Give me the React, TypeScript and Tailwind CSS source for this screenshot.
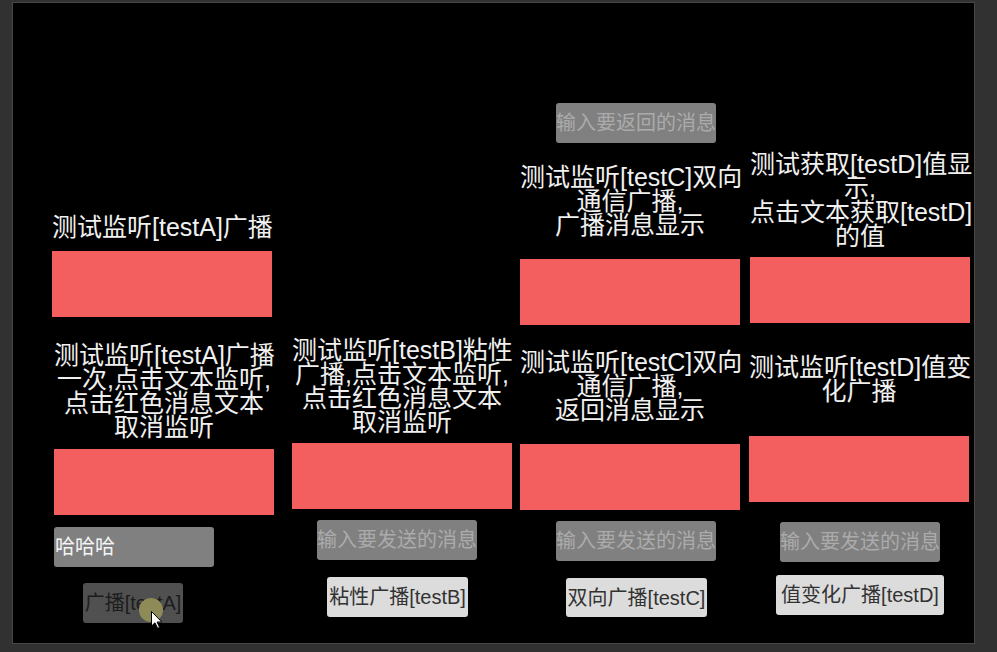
import React from "react";

const font = { fontFamily: '"Liberation Sans", Arial, "Noto Sans CJK SC", sans-serif' };

const Title = ({ lines, className = "" }: { lines: string[]; className?: string }) => (
  <div className={`w-[220px] text-center text-[25px] leading-[24px] text-[#f0f0f0] whitespace-nowrap ${className}`}>
    {lines.map((l, i) => (
      <div key={i}>{l}</div>
    ))}
  </div>
);

const RedBox = ({ className = "" }: { className?: string }) => (
  <div className={`h-[66px] w-[220px] bg-[#f35e5e] ${className}`} />
);

const Field = ({ text, placeholder, className = "" }: { text?: string; placeholder?: string; className?: string }) => (
  <div
    className={`flex h-[40px] w-[160px] items-center overflow-hidden whitespace-nowrap rounded-[3px] bg-[#808080] text-[20px] leading-none ${
      text ? "justify-start pl-[1px] text-[#f5f5f5]" : "justify-center text-[#ababab]"
    } ${className}`}
  >
    {text ?? placeholder}
  </div>
);

const Button = ({ label, className = "" }: { label: string; className?: string }) => (
  <div
    className={`flex h-[40px] items-center justify-center whitespace-nowrap rounded-[3px] bg-[#dcdcdc] text-[20px] leading-none text-[#323232] ${className}`}
  >
    {label}
  </div>
);

export default function App() {
  return (
    <div style={font} className="h-[652px] w-[997px] overflow-hidden bg-[#313131] pl-[12px] pt-[2px]">
      <div className="flex h-[642px] w-[963px] border border-[#474747] bg-black">
        {/* column A */}
        <div className="ml-[39px] flex w-[222px] flex-col">
          <Title className="mt-[212px]" lines={["测试监听[testA]广播"]} />
          <RedBox className="mt-[12px]" />
          <Title className="ml-[2px] mt-[26px]" lines={["测试监听[testA]广播", "一次,点击文本监听,", "点击红色消息文本", "取消监听"]} />
          <RedBox className="ml-[2px] mt-[10px]" />
          <Field className="ml-[2px] mt-[12px]" text="哈哈哈" />
          <div className="relative ml-[31px] mt-[16px] flex h-[40px] w-[100px] items-center justify-center whitespace-nowrap rounded-[3px] bg-[#505050] text-[20px] leading-none text-[#1c1c1c]">
            广播[testA]
            <div className="absolute left-[56px] top-[15px] h-[24px] w-[24px] rounded-full bg-[#8e8b58]" />
            <svg className="absolute left-[68px] top-[28px]" width="12" height="18" viewBox="0 0 12 18">
              <path d="M0.5 0.5 L0.5 15 L4 11.8 L6.6 17.3 L8.6 16.4 L6.1 11 L10.8 11 Z" fill="#fff" stroke="#000" strokeWidth="1" />
            </svg>
          </div>
        </div>

        {/* column B */}
        <div className="ml-[18px] flex w-[220px] flex-col">
          <Title className="mt-[335px]" lines={["测试监听[testB]粘性", "广播,点击文本监听,", "点击红色消息文本", "取消监听"]} />
          <RedBox className="mt-[9px]" />
          <Field className="ml-[25px] mt-[11px]" placeholder="输入要发送的消息" />
          <Button className="ml-[35px] mt-[17px] w-[141px]" label="粘性广播[testB]" />
        </div>

        {/* column C */}
        <div className="ml-[8px] flex w-[220px] flex-col">
          <Field className="ml-[36px] mt-[100px]" placeholder="输入要返回的消息" />
          <Title className="mt-[22px]" lines={["测试监听[testC]双向", "通信广播,", "广播消息显示"]} />
          <RedBox className="mt-[22px]" />
          <Title className="mt-[25px]" lines={["测试监听[testC]双向", "通信广播,", "返回消息显示"]} />
          <RedBox className="mt-[22px]" />
          <Field className="ml-[36px] mt-[11px]" placeholder="输入要发送的消息" />
          <Button className="ml-[46px] mt-[17px] !h-[39px] w-[141px]" label="双向广播[testC]" />
        </div>

        {/* column D */}
        <div className="ml-[9px] flex w-[222px] flex-col">
          <Title className="ml-[1px] mt-[149px]" lines={["测试获取[testD]值显", "示,", "点击文本获取[testD]", "的值"]} />
          <RedBox className="ml-[1px] mt-[9px]" />
          <Title className="mt-[32px]" lines={["测试监听[testD]值变", "化广播"]} />
          <RedBox className="mt-[33px]" />
          <Field className="ml-[31px] mt-[20px]" placeholder="输入要发送的消息" />
          <Button className="ml-[27px] mt-[13px] w-[168px]" label="值变化广播[testD]" />
        </div>
      </div>
    </div>
  );
}
